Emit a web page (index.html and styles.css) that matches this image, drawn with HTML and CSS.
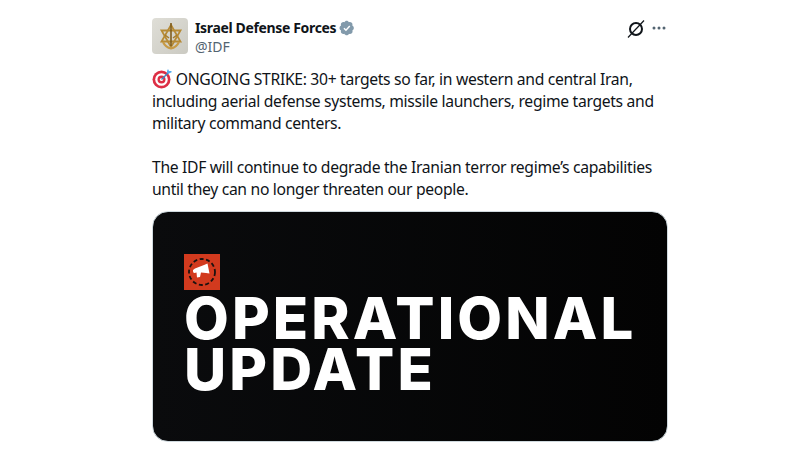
FILE: index.html
```html
<!DOCTYPE html>
<html lang="en">
<head>
    <meta charset="UTF-8">
    <meta name="viewport" content="width=device-width, initial-scale=1.0">
    <title>Israel Defense Forces on X</title>
    <link rel="stylesheet" href="styles.css">
</head>
<body>
    <article class="tweet">
        <header class="tweet-head">
            <div class="avatar">
                <svg width="36" height="36" viewBox="0 0 36 36">
                    <g fill="none" stroke="#b68a35" stroke-width="1.800">
                        <path d="M19 7l9.500 16.500h-19z"/>
                        <path d="M19 29l9.500-16.500h-19z"/>
                    </g>
                    <path d="M19 5v23" stroke="#7f5d1e" stroke-width="1.600"/>
                    <path d="M11 24c2 4 5 6 8 6.500 3-.5 6-2.500 8-6.500" fill="none" stroke="#c79a45" stroke-width="2.200"/>
                    <path d="M13 17l4 3M25 17l-4 3" stroke="#a57a2b" stroke-width="1.500"/>
                </svg>
            </div>
            <div class="names">
                <div class="name-row">
                    <span class="name">Israel Defense Forces</span>
                    <svg class="badge" width="16" height="16" viewBox="0 0 22 22">
                        <path d="M20.400 11c0-1.400-.8-2.700-2.100-3.300.5-1.300.2-2.800-.8-3.800s-2.500-1.300-3.800-.8C13.100 1.800 11.900 1 10.500 1S8 1.800 7.400 3.100c-1.300-.5-2.800-.2-3.800.8s-1.300 2.500-.8 3.800C1.500 8.300.7 9.600.7 11s.8 2.700 2.100 3.300c-.5 1.300-.2 2.800.8 3.800s2.500 1.300 3.800.8c.6 1.300 1.800 2.100 3.200 2.100s2.600-.8 3.200-2.100c1.300.5 2.800.2 3.800-.8s1.300-2.500.8-3.800c1.200-.6 2-1.900 2-3.300z" fill="#829aab"/>
                        <path d="M6.800 11.200l2.800 2.800 5.200-5.600" fill="none" stroke="#fff" stroke-width="2"/>
                    </svg>
                </div>
                <div class="handle">@IDF</div>
            </div>
            <div class="actions">
                <svg class="x-logo" width="18" height="18" viewBox="0 0 18 18">
                    <circle cx="9" cy="9" r="6" fill="none" stroke="#0f1419" stroke-width="2"/>
                    <path d="M1 17.500L17 .5" stroke="#0f1419" stroke-width="1.200"/>
                </svg>
                <svg width="14" height="4" viewBox="0 0 14 4">
                    <circle cx="2" cy="2" r="1.500" fill="#536471"/>
                    <circle cx="7" cy="2" r="1.500" fill="#536471"/>
                    <circle cx="12" cy="2" r="1.500" fill="#536471"/>
                </svg>
            </div>
        </header>

        <p class="tweet-text"><svg class="target" width="20" height="20" viewBox="0 0 20 20">
                <circle cx="9.500" cy="10.500" r="9" fill="#dd2e44"/>
                <circle cx="9.500" cy="10.500" r="6.300" fill="#fff"/>
                <circle cx="9.500" cy="10.500" r="4" fill="#dd2e44"/>
                <circle cx="9.500" cy="10.500" r="1.600" fill="#fff"/>
                <path d="M9.500 10.500L17 3" stroke="#3b88c3" stroke-width="1.500"/>
                <path d="M15 2l1-2 1 2 2 0 1 1-3 1.500-2-.5z" fill="#55acee"/>
            </svg> ONGOING STRIKE: 30+ targets so far, in western and central Iran,
including aerial defense systems, missile launchers, regime targets and
military command centers.

The IDF will continue to degrade the Iranian terror regime’s capabilities
until they can no longer threaten our people.</p>

        <div class="media">
            <div class="media-logo">
                <svg width="36" height="36" viewBox="0 0 36 36">
                    <circle cx="18" cy="18" r="13" fill="none" stroke="#1a1210" stroke-width="1.800" stroke-dasharray="4 2.500"/>
                    <path d="M9 16l2-1.500 9-3.500 3.500-1.500 2 10-3.500-.5-5-.5-1 4.500-3 .5-.5-5-2 .5C9 19 9 17.500 9 16z" fill="#fff"/>
                </svg>
            </div>
            <h2 class="media-title">OPERATIONAL<br>UPDATE</h2>
        </div>
    </article>
</body>
</html>
```

FILE: styles.css
```css
body {
    margin: 0;
    background: #fff;
    font-family: "Noto Sans", Arial, sans-serif;
    color: #0f1419;
}
.tweet {
    width: 516px;
    margin: 0 0 0 152px;
    padding-top: 18px;
}
.tweet-head {
    display: flex;
    align-items: flex-start;
    gap: 8px;
}
.avatar {
    width: 36px;
    height: 36px;
    border-radius: 4px;
    background: linear-gradient(135deg, #dfded7, #cbcac2);
    overflow: hidden;
}
.names {
    flex: 1;
}
.name-row {
    display: flex;
    align-items: center;
    gap: 3px;
    height: 19px;
}
.name {
    font-size: 14px;
    font-weight: 700;
    letter-spacing: -0.35px;
    margin-left: -1px;
}
.handle {
    margin-left: -1px;
    font-size: 14px;
    line-height: 19px;
    color: #536471;
}
.actions {
    display: flex;
    align-items: center;
    gap: 7px;
    padding-right: 2px;
    height: 19px;
}
.x-logo {
    margin-top: 2px;
}
.tweet-text {
    margin: 12px 0 11px;
    font-size: 15.7px;
    line-height: 22px;
    white-space: pre;
    letter-spacing: -0.32px;
}
.target {
    vertical-align: -4px;
}
.media {
    height: 231px;
    box-sizing: border-box;
    padding: 42px 0 0 31px;
    border: 1px solid #cfd9de;
    border-radius: 16px;
    background: linear-gradient(90deg, #0a0b0d, #030303);
}
.media-logo {
    width: 36px;
    height: 36px;
    background: #d23a1e;
}
.media-title {
    margin: 3px 0 0;
    font-family: Inter, sans-serif;
    font-size: 58px;
    font-weight: 800;
    line-height: 51px;
    letter-spacing: 3.100px;
    color: #fff;
}
```
